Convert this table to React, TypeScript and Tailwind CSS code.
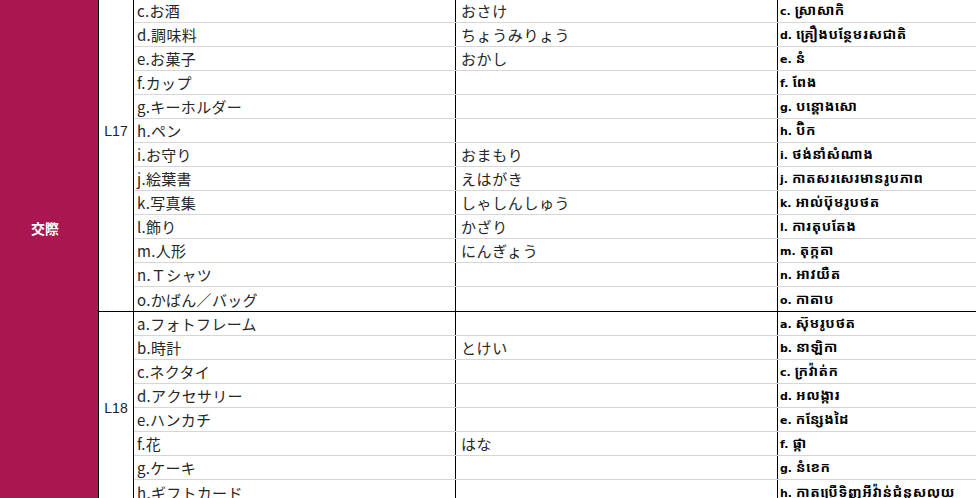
import React from "react";

type Row = { jp: string; kana: string; km: string; l: string };

const lessons: { id: string; rows: Row[] }[] = [
  {
    id: "L17",
    rows: [
      { l: "", jp: "", kana: "", km: "" },
      { l: "", jp: "", kana: "", km: "" },
      { l: "c.", jp: "お酒", kana: "おさけ", km: "ស្រាសាកិ" },
      { l: "d.", jp: "調味料", kana: "ちょうみりょう", km: "គ្រឿងបន្ថែមរសជាតិ" },
      { l: "e.", jp: "お菓子", kana: "おかし", km: "នំ" },
      { l: "f.", jp: "カップ", kana: "", km: "ពែង" },
      { l: "g.", jp: "キーホルダー", kana: "", km: "បន្តោងសោ" },
      { l: "h.", jp: "ペン", kana: "", km: "ប៊ិក" },
      { l: "i.", jp: "お守り", kana: "おまもり", km: "ថង់នាំសំណាង" },
      { l: "j.", jp: "絵葉書", kana: "えはがき", km: "កាតសរសេរមានរូបភាព" },
      { l: "k.", jp: "写真集", kana: "しゃしんしゅう", km: "អាល់ប៊ុមរូបថត" },
      { l: "l.", jp: "飾り", kana: "かざり", km: "ការតុបតែង" },
      { l: "m.", jp: "人形", kana: "にんぎょう", km: "តុក្កតា" },
      { l: "n.", jp: "Ｔシャツ", kana: "", km: "អាវយឺត" },
      { l: "o.", jp: "かばん／バッグ", kana: "", km: "កាតាប" },
    ],
  },
  {
    id: "L18",
    rows: [
      { l: "a.", jp: "フォトフレーム", kana: "", km: "ស៊ុមរូបថត" },
      { l: "b.", jp: "時計", kana: "とけい", km: "នាឡិកា" },
      { l: "c.", jp: "ネクタイ", kana: "", km: "ក្រវ៉ាត់ក" },
      { l: "d.", jp: "アクセサリー", kana: "", km: "អលង្ការ" },
      { l: "e.", jp: "ハンカチ", kana: "", km: "កន្សែងដៃ" },
      { l: "f.", jp: "花", kana: "はな", km: "ផ្កា" },
      { l: "g.", jp: "ケーキ", kana: "", km: "នំខេក" },
      { l: "h.", jp: "ギフトカード", kana: "", km: "កាតប្រើទិញអីវ៉ាន់ជំនួសលុយ" },
    ],
  },
];

const jpFont = { fontFamily: '"Noto Sans CJK JP", "Noto Sans", sans-serif' };

export default function App() {
  return (
    <div className="w-[976px] h-[498px] overflow-hidden bg-white">
      <div className="-mt-[49px] flex">
        <div className="w-[99px] shrink-0 bg-[#aa1650] border-r border-black flex items-center justify-center pr-[8px]">
          <span className="text-white text-[14px] font-bold" style={jpFont}>
            交際
          </span>
        </div>
        <div className="flex-1 flex flex-col">
          {lessons.map((lesson) => (
            <div key={lesson.id} className="flex border-b border-black">
              <div
                className="w-[35px] shrink-0 border-r border-black flex items-center justify-center text-[14px] text-[#222]"
                style={{ fontFamily: '"Liberation Sans", Arial, sans-serif' }}
              >
                {lesson.id}
              </div>
              <div className="flex-1 flex flex-col">
                {lesson.rows.map((r, i) => (
                  <div
                    key={i}
                    className={
                      "flex h-[24px] " +
                      (i < lesson.rows.length - 1 ? "border-b border-[#d6d6d6]" : "")
                    }
                  >
                    <div
                      className="w-[322px] shrink-0 border-r border-black pl-[3px] flex items-center text-[15px] tracking-[0.3px] text-[#262626] leading-none whitespace-nowrap"
                      style={jpFont}
                    >
                      {r.l}
                      {r.jp}
                    </div>
                    <div
                      className="w-[322px] shrink-0 border-r border-black pl-[5px] flex items-center text-[15px] tracking-[0.6px] text-[#262626] leading-none whitespace-nowrap"
                      style={jpFont}
                    >
                      {r.kana}
                    </div>
                    <div className="flex-1 pl-[2px] flex items-center text-black font-bold whitespace-nowrap overflow-hidden">
                      {r.l && (
                        <span className="leading-[22px]">
                          <span
                            className="text-[11px]"
                            style={{ fontFamily: '"DejaVu Sans", Tahoma, sans-serif' }}
                          >
                            {r.l}
                          </span>
                          <span
                            className="ml-[4px] text-[14px] tracking-[0.5px]"
                            style={{
                              fontFamily:
                                '"Khmer OS", "Noto Sans Khmer", "Khmer UI", "Noto Serif Khmer", "DejaVu Sans", sans-serif',
                            }}
                          >
                            {r.km}
                          </span>
                        </span>
                      )}
                    </div>
                  </div>
                ))}
              </div>
            </div>
          ))}
        </div>
      </div>
    </div>
  );
}
